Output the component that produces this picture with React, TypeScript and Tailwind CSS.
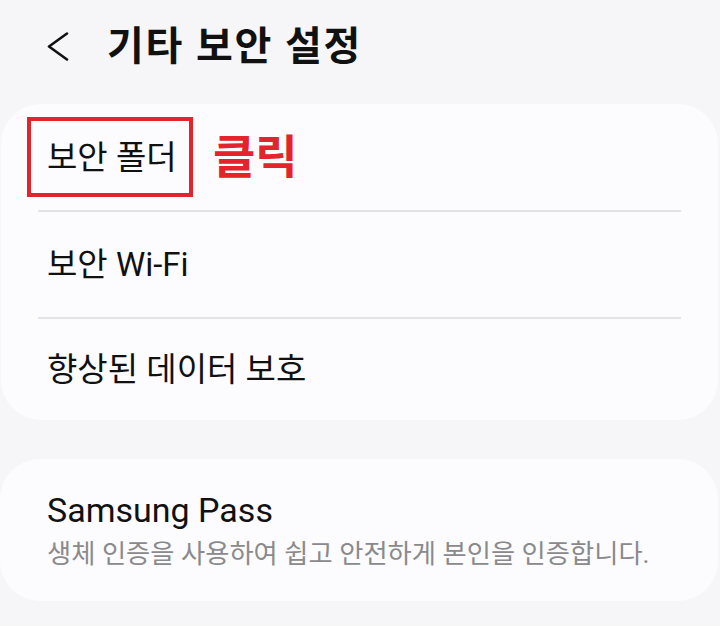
import React from 'react';

const font = { fontFamily: 'Roboto, "Noto Sans CJK KR", sans-serif' };

const Divider = () => <div className="mx-[37px] h-[2px] bg-[#e3e3e5]" />;

export default function App() {
  return (
    <div className="w-[720px] h-[626px] overflow-hidden bg-[#f6f6f8] text-[#111]" style={font}>
      {/* Header */}
      <div className="h-[104px] flex items-center pb-[10px] pl-[47px]">
        <svg width="22" height="30" viewBox="0 0 22 30" className="shrink-0">
          <polyline points="20,1.5 2,14.5 20,27.5" fill="none" stroke="#111" strokeWidth="2.6" strokeLinecap="round" strokeLinejoin="round" />
        </svg>
        <h1 className="ml-[38px] text-[40px] font-bold tracking-[1.8px] leading-none">기타 보안 설정</h1>
      </div>

      {/* Security items */}
      <div className="ml-[1px] mr-[2px] rounded-[40px] bg-[#fcfcfe]">
        <div className="h-[106px] flex items-center pl-[26px]">
          <div className="h-[80px] w-[166px] flex items-center border-4 border-[#e3242b] pl-[16px]">
            <span className="text-[33px] leading-none whitespace-nowrap">보안 폴더</span>
          </div>
          <span className="ml-[20px] text-[46px] font-bold leading-none text-[#e3242b]">클릭</span>
        </div>
        <Divider />
        <div className="h-[105px] flex items-center px-[46px]">
          <span className="text-[33px] leading-none">보안 Wi-Fi</span>
        </div>
        <Divider />
        <div className="h-[101px] flex items-center px-[46px]">
          <span className="text-[33px] leading-none">향상된 데이터 보호</span>
        </div>
      </div>

      {/* Samsung Pass */}
      <div className="mt-[39px] mr-[2px] h-[142px] rounded-[40px] bg-[#fcfcfe] flex flex-col justify-center px-[47px]">
        <div className="text-[34px] leading-none">Samsung Pass</div>
        <div className="mt-[14px] text-[26.3px] leading-none text-[#8a8a8c] whitespace-nowrap">생체 인증을 사용하여 쉽고 안전하게 본인을 인증합니다.</div>
      </div>
    </div>
  );
}
